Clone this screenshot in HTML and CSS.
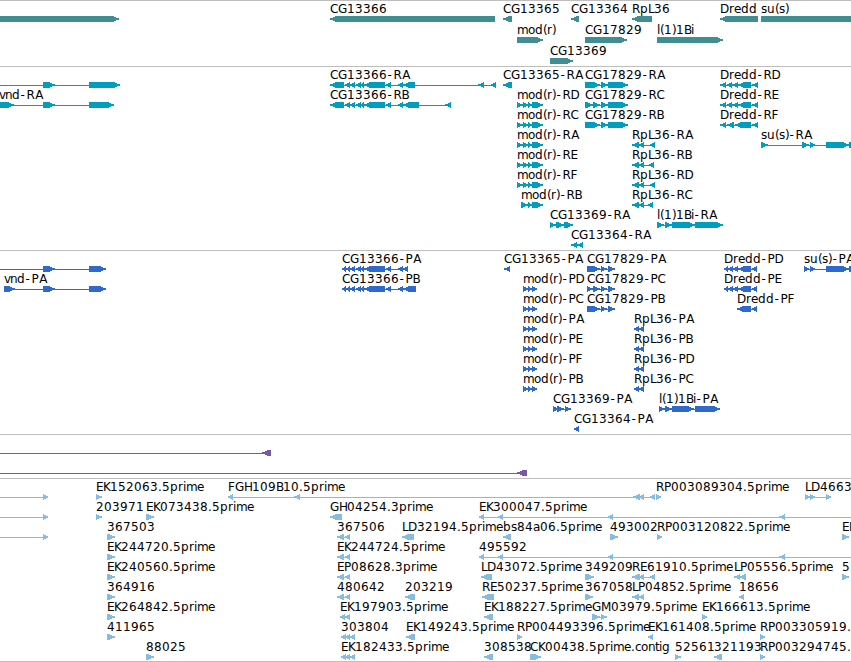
FILE: index.html
```html
<!DOCTYPE html>
<html lang="en">
<head>
<meta charset="utf-8">
<title>Genome tracks</title>
<link rel="stylesheet" href="styles.css">
</head>
<body>
<main class="browser">
  <svg class="track track-gene" data-track="gene"></svg>
  <svg class="track track-transcript" data-track="transcript"></svg>
  <svg class="track track-protein" data-track="protein"></svg>
  <svg class="track track-insertion" data-track="insertion"></svg>
  <svg class="track track-est" data-track="est"></svg>
</main>
<script src="tracks.js"></script>
</body>
</html>
```
FILE: styles.css
```css
body {
  margin: 0;
  background: #fff;
}

.browser {
  display: flex;
  flex-direction: column;
  width: 100%;
  height: 662px;
  box-sizing: border-box;
  overflow: hidden;
  border-bottom: 1px solid #bebebe;
}

.track {
  display: block;
  flex: none;
  width: 100%;
  box-sizing: border-box;
  border-top: 1px solid #bebebe;
  overflow: hidden;
}

.track text {
  font-family: "DejaVu Sans", sans-serif;
  font-size: 12px;
  fill: #000;
}

.track path,
.track rect {
  shape-rendering: crispEdges;
}

.track-gene { height: 66px; fill: #408e94; }
.track-transcript { height: 184px; fill: #009dbf; }
.track-protein { height: 184px; fill: #2f69cc; }
.track-insertion { height: 44px; fill: #7759a9; }
.track-est { height: 183px; fill: #86bcdf; }
```
FILE: tracks.js
```js
// Feature: [row, label, strand, [start, end, start, end, ...]]
const cgR = [330,344, 345,350, 350,355, 356,361, 360,364, 364,385, 386,391, 398,403];
const cgP = [342,346, 346,350, 350,355, 356,361, 360,364, 364,385, 386,391, 398,403];
const modR = [517,523, 523,528, 528,532, 532,543];
const modP = [523,528, 528,532, 532,537];
const drR = [720,726, 727,732, 732,738, 738,751, 752,758];
const drP = [724,728, 728,733, 733,738, 738,751, 752,757];
const rpP = [634,639, 638,644];
const longEst = [479,484, 498,503, 608,613, 779,785, 900,906];

const tracks = {
  gene: { pitch: 21, features: [
    [0, "", "+", [-20,119]],
    [0, "CG13366", "-", [330,495]],
    [0, "CG13365", "-", [503,512]],
    [0, "CG13364", "-", [571,579]],
    [0, "RpL36", "-", [632,652]],
    [0, "Dredd", "-", [720,758]],
    [0, "su(s)", "+", [761,870]],
    [1, "mod(r)", "+", [517,543]],
    [1, "CG17829", "+", [585,627]],
    [1, "l(1)1Bi", "+", [657,723]],
    [2, "CG13369", "+", [550,573]]
  ]},
  transcript: { pitch: 20, features: [
    [0, "", "+", [-20,-10, 43,55, 89,120]],
    [1, "vnd-RA", "+", [-1,14, 43,55, 89,114]],
    [0, "CG13366-RA", "-", [...cgR, 403,415, 478,484, 491,496]],
    [1, "CG13366-RB", "-", [...cgR, 403,419, 445,451]],
    [0, "CG13365-RA", "-", [503,512]],
    [0, "CG17829-RA", "+", [585,600, 601,608, 608,628]],
    [1, "CG17829-RC", "+", [585,593, 593,600, 601,608, 608,628]],
    [2, "CG17829-RB", "+", [585,600, 601,608, 608,628]],
    [1, "mod(r)-RD", "+", modR],
    [2, "mod(r)-RC", "+", modR],
    [3, "mod(r)-RA", "+", modR],
    [4, "mod(r)-RE", "+", modR],
    [5, "mod(r)-RF", "+", modR],
    [6, "mod(r)-RB", "+", [521,528, 528,532, 532,543]],
    [3, "RpL36-RA", "-", [632,639, 638,644, 650,655]],
    [4, "RpL36-RB", "-", [632,639, 638,644, 649,654]],
    [5, "RpL36-RD", "-", [632,639, 638,644, 650,655]],
    [6, "RpL36-RC", "-", [632,639, 638,644, 648,653]],
    [7, "CG13369-RA", "+", [550,556, 556,564, 564,573]],
    [7, "l(1)1Bi-RA", "+", [657,664, 665,672, 672,695, 695,723]],
    [8, "CG13364-RA", "-", [571,577, 577,583]],
    [0, "Dredd-RD", "-", drR],
    [1, "Dredd-RE", "-", drR],
    [2, "Dredd-RF", "-", [720,726, 727,734, 735,751, 752,758]],
    [3, "su(s)-RA", "+", [761,768, 802,809, 810,815, 826,849, 849,856]]
  ]},
  protein: { pitch: 20, features: [
    [0, "", "+", [-20,-10, 43,55, 89,106]],
    [1, "vnd-PA", "+", [4,15, 43,55, 89,106]],
    [0, "CG13366-PA", "-", [...cgP, 403,408]],
    [1, "CG13366-PB", "-", [...cgP, 403,416]],
    [0, "CG13365-PA", "-", [504,510]],
    [0, "CG17829-PA", "+", [587,600, 601,607, 608,615]],
    [1, "CG17829-PC", "+", [587,593, 593,600, 601,607, 608,615]],
    [2, "CG17829-PB", "+", [587,600, 601,607, 608,615]],
    [1, "mod(r)-PD", "+", modP],
    [2, "mod(r)-PC", "+", modP],
    [3, "mod(r)-PA", "+", modP],
    [4, "mod(r)-PE", "+", modP],
    [5, "mod(r)-PF", "+", modP],
    [6, "mod(r)-PB", "+", modP],
    [3, "RpL36-PA", "-", rpP],
    [4, "RpL36-PB", "-", rpP],
    [5, "RpL36-PD", "-", rpP],
    [6, "RpL36-PC", "-", rpP],
    [7, "CG13369-PA", "+", [553,558, 557,564, 565,571]],
    [7, "l(1)1Bi-PA", "+", [659,665, 665,672, 672,694, 695,720]],
    [8, "CG13364-PA", "-", [574,579]],
    [0, "Dredd-PD", "-", drP],
    [1, "Dredd-PE", "-", drP],
    [2, "Dredd-PF", "-", [737,751, 752,757]],
    [0, "su(s)-PA", "+", [804,809, 810,815, 826,849, 849,856]]
  ]},
  insertion: { pitch: 20, features: [
    [0, "", "-", [-20,-10, 262,271]],
    [1, "", "-", [-20,-10, 517,527]]
  ]},
  est: { pitch: 20, features: [
    [0, "", "+", [-20,-10, 43,48]],
    [1, "", "+", [-20,-10, 43,48]],
    [2, "", "+", [-20,-10, 43,48]],
    [0, "EK152063.5prime", "+", [96,102]],
    [1, "203971", "+", [96,102]],
    [1, "EK073438.5prime", "+", [146,154]],
    [2, "367503", "+", [107,115]],
    [3, "EK244720.5prime", "+", [107,115]],
    [4, "EK240560.5prime", "+", [107,115]],
    [5, "364916", "+", [107,115]],
    [6, "EK264842.5prime", "+", [107,115]],
    [7, "411965", "+", [107,115]],
    [8, "88025", "+", [146,154]],
    [0, "FGH109B10.5prime", "-", [228,233, 294,300, 633,640, 639,644, 650,655]],
    [0, "RP003089304.5prime", "+", [656,661]],
    [0, "LD4663", "+", [805,810, 810,815, 826,831]],
    [1, "GH04254.3prime", "-", [330,342]],
    [1, "EK300047.5prime", "-", longEst],
    [2, "367506", "-", [337,344, 345,350]],
    [2, "LD32194.5prime", "-", [402,414]],
    [2, "bs84a06.5prime", "-", [503,511]],
    [2, "493002", "+", [610,618]],
    [2, "RP003120822.5prime", "+", [657,662]],
    [2, "EK", "+", [842,849]],
    [3, "EK244724.5prime", "-", [337,344, 345,350]],
    [3, "495592", "-", longEst],
    [4, "EP08628.3prime", "-", [337,344, 345,350]],
    [4, "LD43072.5prime", "-", [481,492]],
    [4, "349209", "+", [585,594]],
    [4, "RE61910.5prime", "-", [632,640, 639,644, 650,655]],
    [4, "LP05556.5prime", "-", [734,740, 739,746]],
    [4, "5", "+", [842,849]],
    [5, "480642", "-", [337,344, 345,350]],
    [5, "203219", "-", [405,415]],
    [5, "RE50237.5prime", "-", [482,494]],
    [5, "367058", "+", [585,593]],
    [5, "LP04852.5prime", "-", [632,639, 638,644]],
    [5, "18656", "-", [739,744]],
    [6, "EK197903.5prime", "-", [340,345, 345,350]],
    [6, "EK188227.5prime", "-", [484,493]],
    [6, "GM03979.5prime", "+", [592,600, 601,607]],
    [6, "EK166613.5prime", "+", [702,707]],
    [7, "303804", "-", [341,346, 345,350, 350,355]],
    [7, "EK149243.5prime", "-", [406,415]],
    [7, "RP004493396.5prime", "+", [517,522]],
    [7, "EK161408.5prime", "-", [648,653]],
    [7, "RP003305919.", "+", [760,765]],
    [8, "EK182433.5prime", "-", [341,346, 345,350, 350,355]],
    [8, "308538", "-", [484,493]],
    [8, "CK00438.5prime.contig", "+", [530,541]],
    [8, "52561", "+", [675,681]],
    [8, "321193", "-", [714,722]],
    [8, "RP003294745.", "+", [760,765]]
  ]}
};

// Whole-pixel glyph advances for 12px labels; digits and others use 8.
const advance = { C: 8, G: 9, D: 9, E: 7, F: 7, H: 8, K: 7, L: 6, M: 10, P: 7,
  B: 7, a: 7, c: 6, e: 7, i: 3, l: 3, m: 11, n: 7, o: 7, r: 5, s: 6, t: 4, v: 6,
  "(": 4, ")": 4, "-": 6, ".": 4 };

// Extra space before a glyph.
const lead = { A: 0.8, "-": 0.5 };

const NS = "http://www.w3.org/2000/svg";
function add(parent, name, attrs) {
  const el = document.createElementNS(NS, name);
  for (const key in attrs) el.setAttribute(key, attrs[key]);
  parent.appendChild(el);
  return el;
}

function arrow(start, end, top, strand) {
  const head = Math.min(6, end - start);
  return strand === "+"
    ? `M${start} ${top}H${end - head}L${end} ${top + 2.6}V${top + 3.4}L${end - head} ${top + 6}H${start}Z`
    : `M${end} ${top}H${start + head}L${start} ${top + 2.6}V${top + 3.4}L${start + head} ${top + 6}H${end}Z`;
}

document.querySelectorAll(".track").forEach(svg => {
  const { pitch, features } = tracks[svg.dataset.track];
  for (const [row, label, strand, exons] of features) {
    const base = 12 + row * pitch;
    const first = exons[0], last = exons[exons.length - 1];
    if (exons.length > 2) {
      add(svg, "rect", { x: first, y: base + 6, width: last - first, height: 1 });
    }
    let d = "";
    for (let i = 0; i < exons.length; i += 2) {
      d += arrow(exons[i], exons[i + 1], base + 3, strand);
    }
    add(svg, "path", { d });
    if (label) {
      let x = first;
      const xs = [...label].map(ch => {
        const at = x + (lead[ch] || 0);
        x = at + (advance[ch] || 8);
        return at;
      });
      add(svg, "text", { x: xs.join(" "), y: base }).textContent = label;
    }
  }
});
```
